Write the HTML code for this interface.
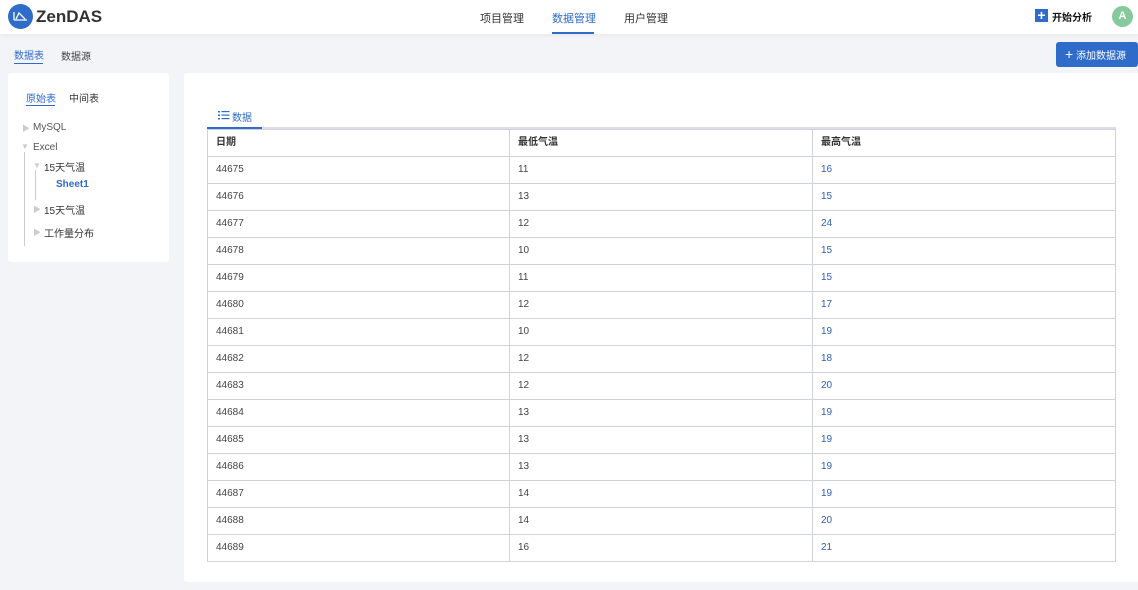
<!DOCTYPE html>
<html><head><meta charset="utf-8"><style>
*{box-sizing:border-box;margin:0;padding:0}
body{width:1138px;height:590px;background:#f3f4f8;font-family:"Liberation Sans","Noto Sans CJK SC",sans-serif;font-size:12px;color:#333;position:relative;overflow:hidden}
.hdr{position:absolute;left:0;top:0;width:1138px;height:34px;background:#fff;box-shadow:0 1px 4px rgba(0,0,0,.06)}
.abs{position:absolute;white-space:nowrap}
.card{position:absolute;background:#fff;border-radius:3px}
table{position:absolute;left:207px;top:129px;width:909px;border-collapse:collapse}
td{border:1px solid #cfd2dc;height:27px;padding:0 0 0 8px;font-size:10px;color:#444;line-height:10px}
tr:first-child td{font-weight:bold;color:#333}
td.b{color:#2f5db5}
</style></head><body>
<div class="hdr"></div>
<svg class="abs" style="left:8px;top:4px" width="25" height="25" viewBox="0 0 25 25"><circle cx="12.5" cy="12.5" r="12.5" fill="#2f6bc9"/><path d="M6 16V8M6 16H19M8 15l3-6 3 3 3 3" stroke="#fff" stroke-width="1.3" fill="none"/></svg>
<div class="abs" style="left:36px;top:7px;font-size:17px;font-weight:bold;color:#333">ZenDAS</div>
<div class="abs" style="left:480px;top:10px;font-size:11px">项目管理</div>
<div class="abs" style="left:552px;top:10px;font-size:11px;color:#2f6bc9">数据管理</div>
<div class="abs" style="left:552px;top:32px;width:42px;height:2px;background:#2f6bc9"></div>
<div class="abs" style="left:624px;top:10px;font-size:11px">用户管理</div>
<div class="abs" style="left:1035px;top:9px;width:13px;height:13px;background:#2f6bc9;color:#fff;font-size:14px;line-height:12px;text-align:center;font-weight:bold">+</div>
<div class="abs" style="left:1052px;top:9px;font-size:10px;font-weight:bold;color:#111">开始分析</div>
<div class="abs" style="left:1112px;top:6px;width:21px;height:21px;border-radius:50%;background:#86c99a;color:#fff;font-size:11px;font-weight:bold;text-align:center;line-height:21px">A</div>
<div class="abs" style="left:14px;top:47px;font-size:10px;color:#2f6bc9">数据表</div>
<div class="abs" style="left:14px;top:63px;width:29px;height:1px;background:#2f6bc9"></div>
<div class="abs" style="left:61px;top:48px;font-size:10px;color:#444">数据源</div>
<div class="abs" style="left:1056px;top:42px;width:82px;height:25px;background:#2f6bc9;border-radius:3px;color:#fff;font-size:10px;line-height:25px;padding-left:9px"><span style="font-size:14px">+</span> 添加数据源</div>
<div class="card" style="left:8px;top:73px;width:161px;height:189px"></div>
<div class="abs" style="left:26px;top:90px;font-size:10px;color:#2f6bc9">原始表</div>
<div class="abs" style="left:26px;top:105px;width:29px;height:1px;background:#2f6bc9"></div>
<div class="abs" style="left:69px;top:90px;font-size:10px">中间表</div>
<div class="abs" style="left:22px;top:123px;font-size:8px;color:#ccc">▶</div>
<div class="abs" style="left:33px;top:122px;font-size:10px;color:#555">MySQL</div>
<div class="abs" style="left:21px;top:142px;font-size:8px;color:#ccc">▼</div>
<div class="abs" style="left:33px;top:142px;font-size:10px;color:#555">Excel</div>
<div class="abs" style="left:24px;top:152px;width:1px;height:94px;background:#ccc"></div>
<div class="abs" style="left:33px;top:161px;font-size:8px;color:#ccc">▼</div>
<div class="abs" style="left:44px;top:159px;font-size:10px">15天气温</div>
<div class="abs" style="left:35px;top:170px;width:1px;height:30px;background:#ccc"></div>
<div class="abs" style="left:56px;top:179px;font-size:10px;color:#2f6bc9;font-weight:bold">Sheet1</div>
<div class="abs" style="left:33px;top:204px;font-size:8px;color:#ccc">▶</div>
<div class="abs" style="left:44px;top:202px;font-size:10px">15天气温</div>
<div class="abs" style="left:33px;top:227px;font-size:8px;color:#ccc">▶</div>
<div class="abs" style="left:44px;top:225px;font-size:10px">工作量分布</div>
<div class="card" style="left:184px;top:73px;width:960px;height:509px"></div>
<svg class="abs" style="left:218px;top:110px" width="12" height="10"><g fill="#2f6bc9"><rect x="0" y="1" width="2" height="1.5"/><rect x="0" y="4.5" width="2" height="1.5"/><rect x="0" y="8" width="2" height="1.5"/><rect x="3.5" y="1" width="8" height="1.2"/><rect x="3.5" y="4.5" width="8" height="1.2"/><rect x="3.5" y="8" width="8" height="1.2"/></g></svg>
<div class="abs" style="left:232px;top:109px;font-size:10px;color:#2f6bc9">数据</div>
<div class="abs" style="left:207px;top:127px;width:909px;height:2px;background:#dcdfe6"></div>
<div class="abs" style="left:207px;top:127px;width:55px;height:2px;background:#2f6bc9"></div>
<table>
<tr><td style="width:302px">日期</td><td style="width:303px">最低气温</td><td>最高气温</td></tr>
<tr><td>44675</td><td>11</td><td class="b">16</td></tr>
<tr><td>44676</td><td>13</td><td class="b">15</td></tr>
<tr><td>44677</td><td>12</td><td class="b">24</td></tr>
<tr><td>44678</td><td>10</td><td class="b">15</td></tr>
<tr><td>44679</td><td>11</td><td class="b">15</td></tr>
<tr><td>44680</td><td>12</td><td class="b">17</td></tr>
<tr><td>44681</td><td>10</td><td class="b">19</td></tr>
<tr><td>44682</td><td>12</td><td class="b">18</td></tr>
<tr><td>44683</td><td>12</td><td class="b">20</td></tr>
<tr><td>44684</td><td>13</td><td class="b">19</td></tr>
<tr><td>44685</td><td>13</td><td class="b">19</td></tr>
<tr><td>44686</td><td>13</td><td class="b">19</td></tr>
<tr><td>44687</td><td>14</td><td class="b">19</td></tr>
<tr><td>44688</td><td>14</td><td class="b">20</td></tr>
<tr><td>44689</td><td>16</td><td class="b">21</td></tr>
</table>
</body></html>
